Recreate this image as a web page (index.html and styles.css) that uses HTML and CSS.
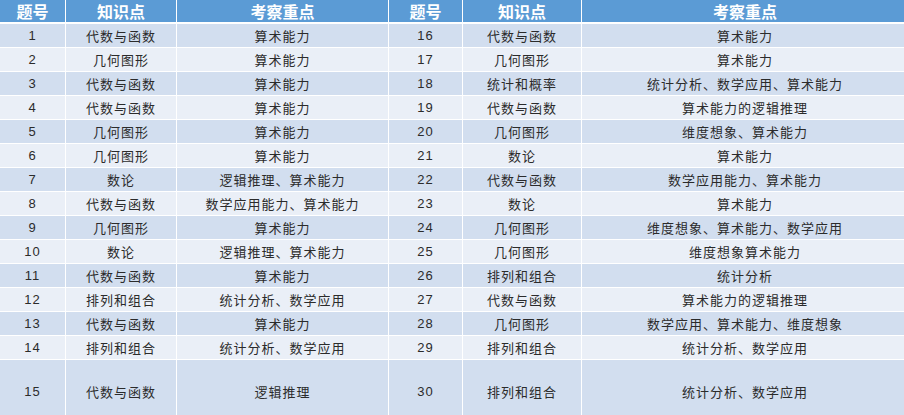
FILE: index.html
```html
<!DOCTYPE html>
<html lang="zh">
<head>
<meta charset="utf-8">
<link rel="stylesheet" href="styles.css">
</head>
<body>
<div class="table">
  <div class="row head">
    <div class="c">题号</div><div class="c">知识点</div><div class="c">考察重点</div>
    <div class="c">题号</div><div class="c">知识点</div><div class="c">考察重点</div>
  </div>
  <div class="row odd"><div class="c">1</div><div class="c">代数与函数</div><div class="c">算术能力</div><div class="c">16</div><div class="c">代数与函数</div><div class="c">算术能力</div></div>
  <div class="row even"><div class="c">2</div><div class="c">几何图形</div><div class="c">算术能力</div><div class="c">17</div><div class="c">几何图形</div><div class="c">算术能力</div></div>
  <div class="row odd"><div class="c">3</div><div class="c">代数与函数</div><div class="c">算术能力</div><div class="c">18</div><div class="c">统计和概率</div><div class="c">统计分析、数学应用、算术能力</div></div>
  <div class="row even"><div class="c">4</div><div class="c">代数与函数</div><div class="c">算术能力</div><div class="c">19</div><div class="c">代数与函数</div><div class="c">算术能力的逻辑推理</div></div>
  <div class="row odd"><div class="c">5</div><div class="c">几何图形</div><div class="c">算术能力</div><div class="c">20</div><div class="c">几何图形</div><div class="c">维度想象、算术能力</div></div>
  <div class="row even"><div class="c">6</div><div class="c">几何图形</div><div class="c">算术能力</div><div class="c">21</div><div class="c">数论</div><div class="c">算术能力</div></div>
  <div class="row odd"><div class="c">7</div><div class="c">数论</div><div class="c">逻辑推理、算术能力</div><div class="c">22</div><div class="c">代数与函数</div><div class="c">数学应用能力、算术能力</div></div>
  <div class="row even"><div class="c">8</div><div class="c">代数与函数</div><div class="c">数学应用能力、算术能力</div><div class="c">23</div><div class="c">数论</div><div class="c">算术能力</div></div>
  <div class="row odd"><div class="c">9</div><div class="c">几何图形</div><div class="c">算术能力</div><div class="c">24</div><div class="c">几何图形</div><div class="c">维度想象、算术能力、数学应用</div></div>
  <div class="row even"><div class="c">10</div><div class="c">数论</div><div class="c">逻辑推理、算术能力</div><div class="c">25</div><div class="c">几何图形</div><div class="c">维度想象算术能力</div></div>
  <div class="row odd"><div class="c">11</div><div class="c">代数与函数</div><div class="c">算术能力</div><div class="c">26</div><div class="c">排列和组合</div><div class="c">统计分析</div></div>
  <div class="row even"><div class="c">12</div><div class="c">排列和组合</div><div class="c">统计分析、数学应用</div><div class="c">27</div><div class="c">代数与函数</div><div class="c">算术能力的逻辑推理</div></div>
  <div class="row odd"><div class="c">13</div><div class="c">代数与函数</div><div class="c">算术能力</div><div class="c">28</div><div class="c">几何图形</div><div class="c">数学应用、算术能力、维度想象</div></div>
  <div class="row even"><div class="c">14</div><div class="c">排列和组合</div><div class="c">统计分析、数学应用</div><div class="c">29</div><div class="c">排列和组合</div><div class="c">统计分析、数学应用</div></div>
  <div class="row odd tall"><div class="c">15</div><div class="c">代数与函数</div><div class="c">逻辑推理</div><div class="c">30</div><div class="c">排列和组合</div><div class="c">统计分析、数学应用</div></div>
</div>
</body>
</html>
```

FILE: styles.css
```css
html, body {
  margin: 0;
  padding: 0;
  background: #ffffff;
  overflow: hidden;
}

.table {
  width: 908px;
  display: flex;
  flex-direction: column;
  gap: 1px;
  background: #ffffff;
  font-family: "Liberation Sans", "Noto Sans CJK SC", sans-serif;
}

.row {
  display: grid;
  grid-template-columns: 65px 110px 211px 73px 118px 326px;
  column-gap: 1px;
  height: 23px;
}

.c {
  display: flex;
  align-items: center;
  justify-content: center;
  font-size: 13px;
  letter-spacing: 1px;
  color: #2b2b2b;
  white-space: nowrap;
}

.head .c {
  box-sizing: border-box;
  height: 23px;
  border-bottom: 1px solid #ffffff;
  background: #5b9bd5;
  color: #ffffff;
  font-weight: bold;
  font-size: 16px;
  letter-spacing: 0;
}

.odd .c {
  background: #d2deef;
}

.even .c {
  background: #eaeff7;
}

.tall {
  height: 62px;
}
```
